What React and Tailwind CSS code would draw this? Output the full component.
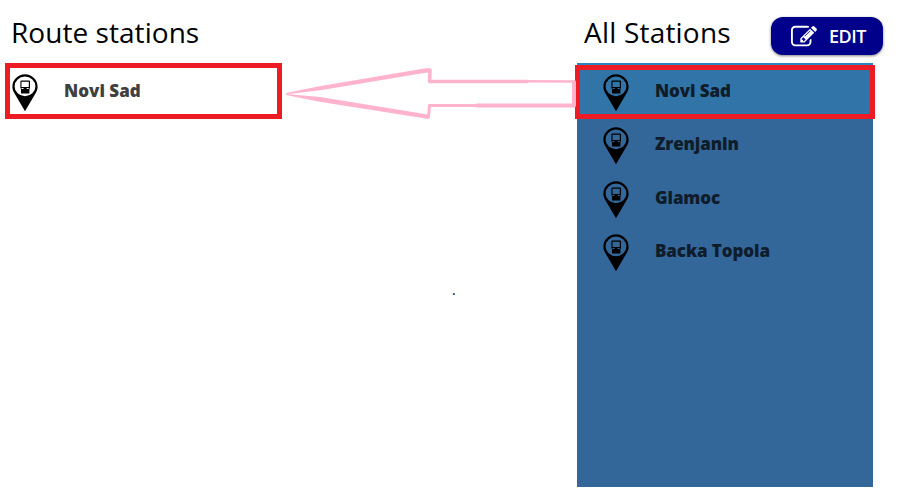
const stations = ["Novi Sad", "Zrenjanin", "Glamoc", "Backa Topola"];

function StationPin({ className = "" }) {
  return (
    <svg width="26" height="38" viewBox="0 0 26 38" className={`shrink-0 ${className}`} aria-hidden="true">
      <path
        fillRule="evenodd"
        d="M13 .3C6 .3.4 5.9.4 12.700c0 2 .5 3.600 1.300 5.200L13 37.200l11.300-19.300c.8-1.600 1.300-3.200 1.300-5.200C25.600 5.900 20 .3 13 .3Zm0 2.300a10.400 9.800 0 1 1 0 19.600a10.400 9.800 0 1 1 0-19.600Z"
      />
      <path
        fillRule="evenodd"
        d="M9.500 6.500h7.500q1 0 1 1v6.500l-.6 1v4.500H9v-4.500l-.6-1V7.500q0-1 1.100-1Zm0 1.200v5.300h7.300V7.700Zm0 6.300v.9h2v-.9Zm5.200 0v.9h2v-.9Z"
      />
    </svg>
  );
}

function EditIcon() {
  return (
    <svg width="26" height="26" viewBox="0 0 1792 1792" fill="currentColor" className="mt-[2px] shrink-0" aria-hidden="true">
      <path d="M888 1184l116-116-152-152-116 116v56h96v96h56zm440-720q-16-16-33 1l-350 350q-17 17-1 33t33-1l350-350q17-17 1-33zm80 594v190q0 119-84.5 203.5t-203.5 84.5h-832q-119 0-203.5-84.5t-84.5-203.5v-832q0-119 84.5-203.5t203.5-84.5h832q63 0 117 25 15 7 18 23 3 17-9 29l-49 49q-14 14-32 8-23-6-45-6h-832q-66 0-113 47t-47 113v832q0 66 47 113t113 47h832q66 0 113-47t47-113v-126q0-13 9-22l64-64q15-15 35-7t20 29zm-96-738l288 288-672 672h-288v-288zm444 132l-92 92-288-288 92-92q28-28 68-28t68 28l152 152q28 28 28 68t-28 68z" />
    </svg>
  );
}

function DragArrow() {
  return (
    <svg
      width="300"
      height="60"
      viewBox="280 62 300 60"
      fill="none"
      stroke="#ffb3cc"
      strokeLinejoin="round"
      strokeLinecap="round"
      className="pointer-events-none absolute left-[280px] top-[62px]"
      aria-hidden="true"
    >
      <path d="M286 93L318 86.500L424 68.500L430 68.200L430 72L322 90L287 94.300Z" fill="#ffb3cc" stroke="none" />
      <path d="M286 94L320 97L428 114.500L429 119L424 118.300L318 101.500L286 95Z" fill="#ffb3cc" stroke="none" />
      <path d="M426 70.500L430 70.200L429.500 81.500H527" strokeWidth="3.500" />
      <path d="M525 81.200L573.500 81.500" strokeWidth="2.500" />
      <path d="M574 82V105.500" strokeWidth="4" />
      <path d="M426 117H428.500L429.500 105.500H480" strokeWidth="3" />
      <path d="M477 105.500H573" strokeWidth="4" />
    </svg>
  );
}

export default function App() {
  return (
    <main className="relative flex h-[498px] w-[900px] overflow-hidden bg-white font-['Open_Sans','Noto_Sans',sans-serif] text-black">
      <section className="ml-[5px] w-[277px]">
        <header className="flex h-[63px] items-center pl-[6px]">
          <h1 className="whitespace-nowrap text-[28px] leading-none tracking-[0.050px]">Route stations</h1>
        </header>
        <div className="flex h-14 items-center border-[5px] border-[#ed1c24] pl-[2px]">
          <StationPin className="mt-[3px]" />
          <span className="ml-[26px] -mt-[2px] whitespace-nowrap text-[17px] font-extrabold leading-none text-[#404040]">
            Novi Sad
          </span>
        </div>
      </section>

      <section className="ml-[295px] w-[308px]">
        <header className="flex h-[63px] items-center pl-[7px]">
          <h1 className="w-[187px] whitespace-nowrap text-[28px] leading-none tracking-[0.200px]">All Stations</h1>
          <button className="mt-[9px] flex h-[38px] w-[112px] shrink-0 items-center rounded-[12px] bg-[#00008b] pl-5 text-white shadow-[0_1px_3px_rgba(0,0,0,0.5)]">
            <EditIcon />
            <span className="ml-[12px] -mt-px text-[18px] font-semibold leading-none tracking-[-0.500px]">EDIT</span>
          </button>
        </header>
        <ul className="h-[424px] w-[296px] bg-[#336699]">
          {stations.map((name, i) => (
            <li
              key={name}
              className={`relative flex items-center pl-[26px] ${
                i === 0 ? "h-[55px] border-t-2 border-[#2b84bd] bg-[#3174a8]" : "h-[53.400px]"
              }`}
            >
              <StationPin className={i === 0 ? "mt-[2px]" : "mt-[3px]"} />
              <span className="ml-[26px] -mt-[2px] whitespace-nowrap text-[17px] font-extrabold leading-none tracking-[-0.100px] text-[#0f1c29]">
                {name}
              </span>
              {i === 0 && <div className="absolute -left-[2px] top-0 h-[54px] w-[300px] border-[5px] border-[#ed1c24]" />}
            </li>
          ))}
        </ul>
      </section>

      <DragArrow />
      <span className="absolute left-[452px] top-[283px] text-[14px] leading-none">.</span>
    </main>
  );
}
